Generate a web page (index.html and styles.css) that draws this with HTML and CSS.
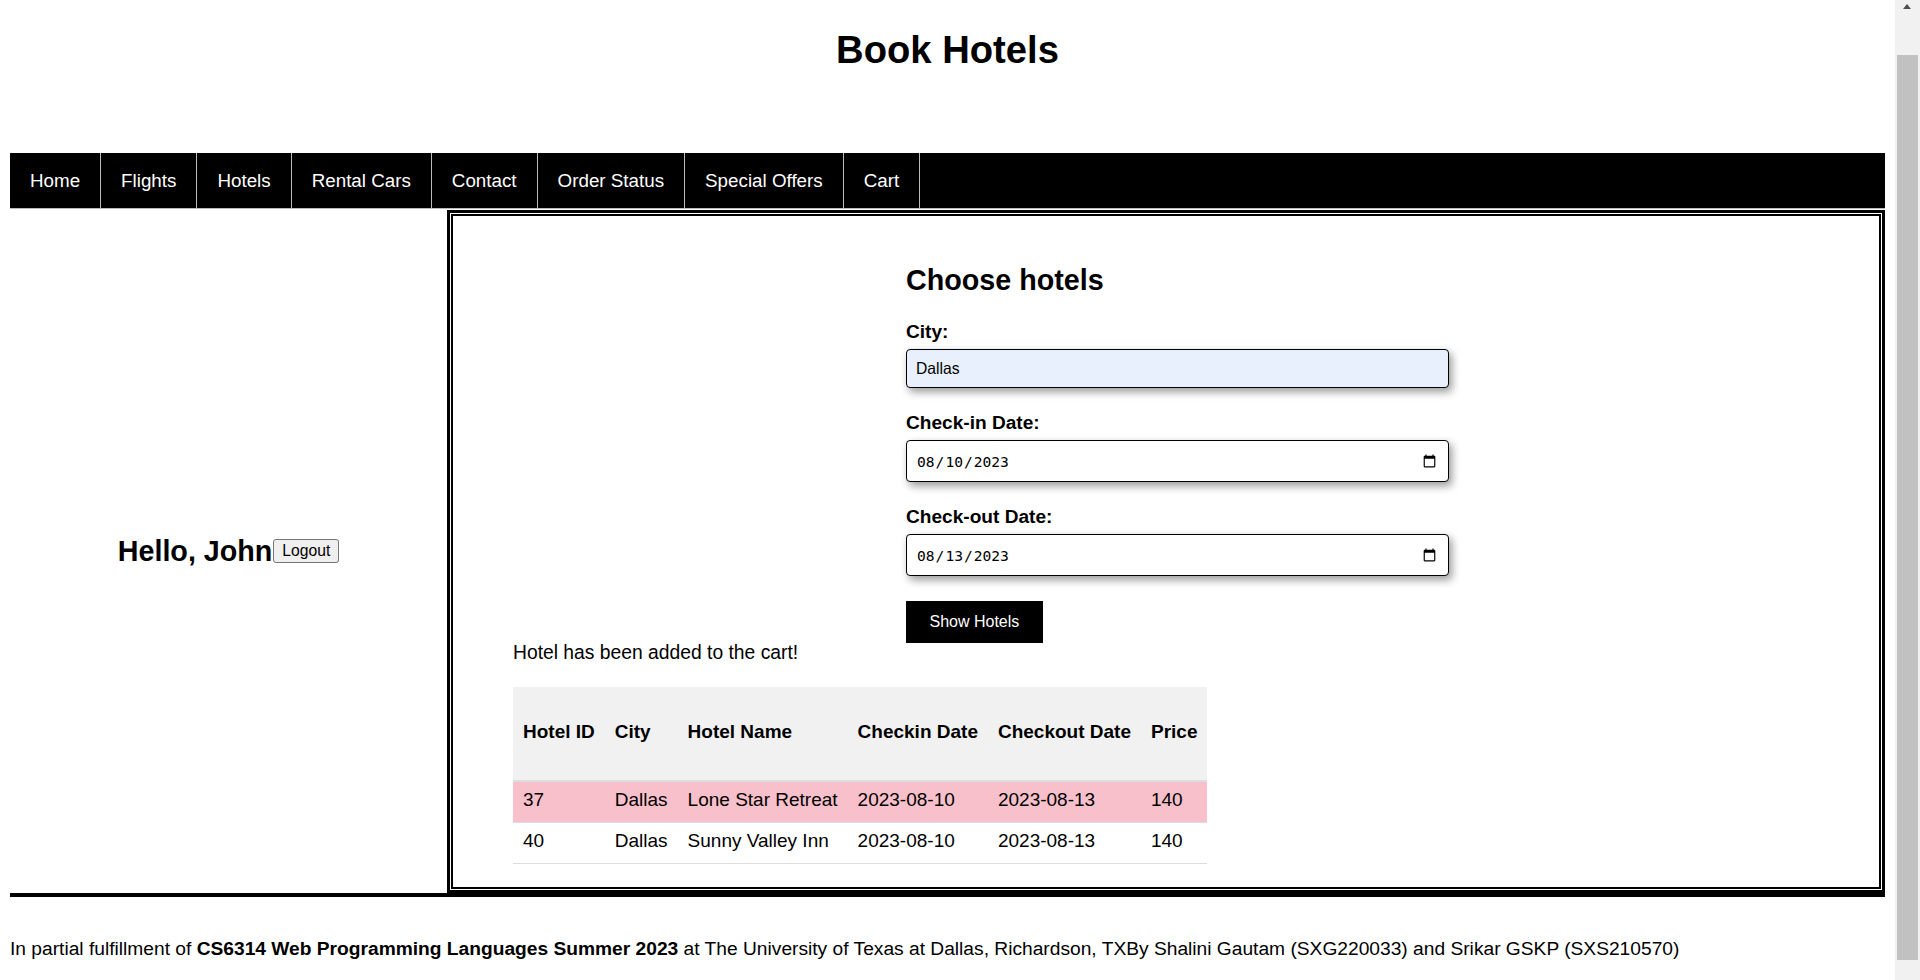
FILE: index.html
```html
<!DOCTYPE html>
<html lang="en">
<head>
<meta charset="utf-8">
<title>Book Hotels</title>
<link rel="stylesheet" href="styles.css">
</head>
<body>
<div class="page">
  <header class="site-header">
    <h1>Book Hotels</h1>
  </header>
  <nav class="topnav">
    <ul>
      <li><a href="#">Home</a></li>
      <li><a href="#">Flights</a></li>
      <li><a href="#">Hotels</a></li>
      <li><a href="#">Rental Cars</a></li>
      <li><a href="#">Contact</a></li>
      <li><a href="#">Order Status</a></li>
      <li><a href="#">Special Offers</a></li>
      <li><a href="#">Cart</a></li>
    </ul>
  </nav>
  <main class="layout">
    <aside class="sidebar">
      <div class="greeting">
        <h2>Hello, John</h2>
        <button type="button" class="logout">Logout</button>
      </div>
    </aside>
    <section class="content">
      <div class="content-inner">
        <form class="search-form">
          <h2>Choose hotels</h2>
          <label for="city">City:</label>
          <input id="city" class="field field-text" type="text" value="Dallas">
          <label for="checkin">Check-in Date:</label>
          <input id="checkin" class="field field-date" type="date" value="2023-08-10">
          <label for="checkout">Check-out Date:</label>
          <input id="checkout" class="field field-date field-last" type="date" value="2023-08-13">
          <button type="button" class="btn-primary">Show Hotels</button>
        </form>
        <p class="message">Hotel has been added to the cart!</p>
        <table class="results">
          <thead>
            <tr>
              <th>Hotel ID</th>
              <th>City</th>
              <th>Hotel Name</th>
              <th>Checkin Date</th>
              <th>Checkout Date</th>
              <th>Price</th>
            </tr>
          </thead>
          <tbody>
            <tr class="selected">
              <td>37</td>
              <td>Dallas</td>
              <td>Lone Star Retreat</td>
              <td>2023-08-10</td>
              <td>2023-08-13</td>
              <td>140</td>
            </tr>
            <tr>
              <td>40</td>
              <td>Dallas</td>
              <td>Sunny Valley Inn</td>
              <td>2023-08-10</td>
              <td>2023-08-13</td>
              <td>140</td>
            </tr>
          </tbody>
        </table>
      </div>
    </section>
  </main>
  <footer class="site-footer">
    <p>In partial fulfillment of <strong>CS6314 Web Programming Languages Summer 2023</strong> at The University of Texas at Dallas, Richardson, TXBy Shalini Gautam (SXG220033) and Srikar GSKP (SXS210570)</p>
  </footer>
</div>
<div class="scrollbar">
  <span class="scroll-arrow"></span>
  <span class="scroll-thumb"></span>
</div>
</body>
</html>
```

FILE: styles.css
```css
html {
  overflow: hidden;
}

body {
  margin: 0;
  background: #fff;
  color: #000;
  font-family: "Liberation Sans", Arial, sans-serif;
  font-size: 19.2px;
}

.page {
  padding: 0 35px 0 10px;
}

/* Header */
.site-header {
  height: 153px;
  box-sizing: border-box;
  padding-top: 28px;
  text-align: center;
}

.site-header h1 {
  margin: 0;
  font-size: 38.2px;
  line-height: 44px;
  font-weight: bold;
}

/* Navigation */
.topnav {
  background: #000;
  border-bottom: 1px solid #bbb;
}

.topnav ul {
  display: flex;
  margin: 0;
  padding: 0;
  list-style: none;
}

.topnav li {
  border-right: 1px solid #bbb;
}

.topnav a {
  display: block;
  padding: 17px 20px;
  color: #fff;
  text-decoration: none;
  font-size: 18.8px;
  line-height: 21px;
}

/* Main layout */
.layout {
  display: flex;
  border-bottom: 4px solid #000;
}

.sidebar {
  width: 437px;
  flex: none;
  display: flex;
  align-items: center;
  justify-content: center;
}

.greeting {
  display: flex;
  align-items: center;
}

.greeting h2 {
  margin: 0;
  font-size: 28.7px;
  line-height: 32px;
  font-weight: bold;
}

.logout {
  margin: 0 0 0 1px;
  padding: 2px 8px;
  font-family: "Liberation Sans", Arial, sans-serif;
  font-size: 15.67px;
  line-height: 18px;
  color: #000;
  background: #efefef;
  border: 1px solid #767676;
  border-radius: 3px;
}

.content {
  flex: 1;
  margin-top: 1px;
  border: 3px solid #000;
  padding: 1px;
}

.content-inner {
  border: 2px solid #000;
  padding: 49px 60px 23.5px;
}

/* Form */
.search-form {
  width: 543px;
  margin-left: 393px;
}

.search-form h2 {
  margin: 0 0 26px;
  font-size: 28.7px;
  line-height: 30px;
  font-weight: bold;
}

.search-form label {
  display: block;
  margin-bottom: 6px;
  font-weight: bold;
  font-size: 19.1px;
  line-height: 22px;
}

.field {
  display: block;
  box-sizing: border-box;
  width: 100%;
  margin: 0 0 24px;
  padding: 0 9px;
  border: 1px solid #000;
  border-radius: 4px;
  background: #fff;
  color: #000;
  box-shadow: 3px 4px 8px rgba(0, 0, 0, 0.4);
  outline: none;
}

.field-text {
  height: 39px;
  background: #e8f0fe;
  font-family: "Liberation Sans", Arial, sans-serif;
  font-size: 15.67px;
}

.field-date {
  height: 42px;
  font-family: "DejaVu Sans Mono", "Liberation Mono", monospace;
  font-size: 14.6px;
}

.field-last {
  margin-bottom: 25px;
}

.btn-primary {
  display: block;
  margin: 0;
  padding: 12px 23.5px;
  border: none;
  border-radius: 0;
  background: #000;
  color: #fff;
  font-family: "Liberation Sans", Arial, sans-serif;
  font-size: 16px;
  line-height: 18px;
}

.message {
  margin: -1px 0 22.5px;
  font-size: 19.3px;
  line-height: 22px;
}

/* Results table */
.results {
  border-collapse: collapse;
  font-size: 19px;
}

.results th {
  padding: 34px 10px 38px;
  line-height: 21px;
  text-align: left;
  font-weight: bold;
  background: #f1f1f1;
  border-bottom: 2px solid #ddd;
  white-space: nowrap;
}

.results td {
  padding: 7px 10px 11px;
  line-height: 22px;
  border-bottom: 1px solid #ddd;
  white-space: nowrap;
}

.results tr.selected td {
  background: #f8c0ca;
}

/* Footer */
.site-footer {
  padding-top: 41px;
}

.site-footer p {
  margin: 0;
  font-size: 19.2px;
  line-height: 22px;
}

/* Window scrollbar */
.scrollbar {
  position: fixed;
  top: 0;
  right: 0;
  width: 25px;
  height: 100%;
  background: #f1f1f1;
}

.scroll-arrow {
  position: absolute;
  top: 4px;
  left: 8px;
  width: 0;
  height: 0;
  border-left: 4.5px solid transparent;
  border-right: 4.5px solid transparent;
  border-bottom: 5px solid #505050;
}

.scroll-thumb {
  position: absolute;
  top: 55px;
  left: 2px;
  right: 2px;
  height: 905px;
  background: #c1c1c1;
}
```
